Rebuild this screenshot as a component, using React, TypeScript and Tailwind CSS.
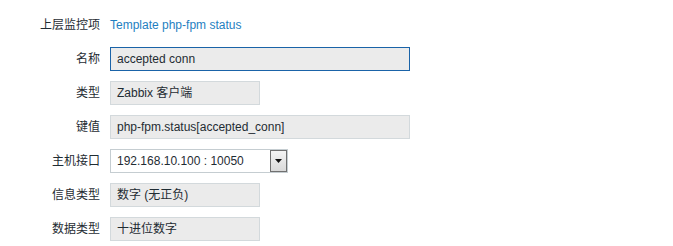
import React from 'react';

const font = { fontFamily: '"Liberation Sans", Arial, "Noto Sans CJK SC", sans-serif' };

const Row: React.FC<{ label: string; children: React.ReactNode }> = ({ label, children }) => (
  <div className="flex items-center h-6">
    <div className="w-[110px] pr-[10px] text-right text-[12px] text-[#1f2c33] whitespace-nowrap">{label}</div>
    {children}
  </div>
);

const ReadOnly: React.FC<{ value: string; width: string }> = ({ value, width }) => (
  <div className={`${width} h-6 flex items-center px-[6px] bg-[#ebebeb] border border-[#d3d9dc] text-[12px] text-[#1f2c33]`}>
    {value}
  </div>
);

export default function App() {
  return (
    <div className="w-[673px] h-[246px] bg-white" style={font}>
      <div className="pt-[13px] flex flex-col gap-[10px]">
        <Row label="上层监控项">
          <span className="text-[12px] text-[#1f7fc1]">Template php-fpm status</span>
        </Row>
        <Row label="名称">
          <div className="w-[300px] h-6 flex items-center px-[6px] bg-[#ebebeb] border border-[#1a63a8] text-[12px] text-[#1f2c33]">
            accepted conn
          </div>
        </Row>
        <Row label="类型">
          <ReadOnly value="Zabbix 客户端" width="w-[150px]" />
        </Row>
        <Row label="键值">
          <ReadOnly value="php-fpm.status[accepted_conn]" width="w-[300px]" />
        </Row>
        <Row label="主机接口">
          <div className="w-[178px] h-6 flex items-center bg-white border border-[#c5cdd1] text-[12px] text-[#1f2c33]">
            <span className="flex-1 pl-[6px]">192.168.10.100 : 10050</span>
            <div className="w-[17px] h-[22px] flex items-center justify-center border border-[#707070] bg-gradient-to-b from-[#f4f4f4] to-[#d9d9d9]">
              <svg width="7" height="4" viewBox="0 0 7 4">
                <path d="M0 0h7L3.5 4z" fill="#111" />
              </svg>
            </div>
          </div>
        </Row>
        <Row label="信息类型">
          <ReadOnly value="数字 (无正负)" width="w-[150px]" />
        </Row>
        <Row label="数据类型">
          <ReadOnly value="十进位数字" width="w-[150px]" />
        </Row>
      </div>
    </div>
  );
}
